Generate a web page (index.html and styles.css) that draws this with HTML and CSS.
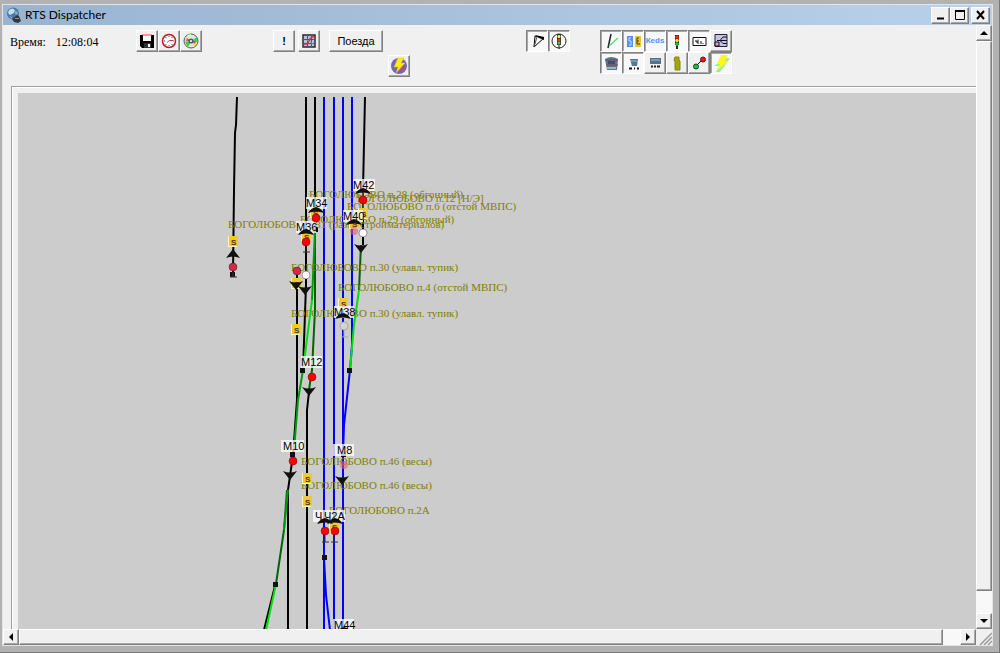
FILE: index.html
```html
<!DOCTYPE html>
<html lang="ru">
<head>
<meta charset="utf-8">
<title>RTS Dispatcher</title>
<link rel="stylesheet" href="styles.css">
</head>
<body>
<div class="window">
  <header class="titlebar">
    <svg class="app-icon" width="16" height="16" viewBox="0 0 16 16" aria-hidden="true">
      <circle cx="7" cy="6.500" r="6" fill="#4b78a8"/>
      <path d="M3 3q3-3 6 0l-1 3-4 2-2-2z" fill="#c4dcec"/>
      <path d="M9 4l3 1-1 3-2-1zM3 9l3 1v2z" fill="#88aacb"/>
      <path d="M6 12l5-4 2 1 2 5-3 2-4-1z" fill="#34383e"/>
      <path d="M9 11h4v1H9z" fill="#8c949c"/>
    </svg>
    <h1 class="title">RTS Dispatcher</h1>
    <div class="window-buttons">
      <button class="btn caption" aria-label="Свернуть"><svg width="14" height="12"><path d="M3 9.500h7" stroke="#000" stroke-width="2"/></svg></button>
      <button class="btn caption" aria-label="Развернуть"><svg width="14" height="12"><path d="M2.500 2v8.500h9V2" fill="none" stroke="#000"/><path d="M2 2h10" stroke="#000" stroke-width="2"/></svg></button>
      <button class="btn caption close" aria-label="Закрыть"><svg width="14" height="12"><path d="M3 2l7 8M10 2l-7 8" stroke="#000" stroke-width="2"/></svg></button>
    </div>
  </header>

  <main class="client">
    <div class="toolbar">
      <p class="clock"><span>Время:</span><time>12:08:04</time></p>

      <div class="group files">
        <button class="btn" aria-label="Сохранить"><svg width="16" height="16"><path d="M1 2h14v13H3l-2-2z" fill="#000"/><path d="M4 1.500h8V8H4z" fill="#fff"/><path d="M3 2h10" stroke="#f33"/><path d="M5 10h7v5H5z" fill="#333"/><path d="M9 11h2v3H9z" fill="#fff"/></svg></button>
        <button class="btn" aria-label="Время"><svg width="16" height="16"><circle cx="8" cy="8" r="6.500" fill="#fff" stroke="#c01820" stroke-width="1.500"/><path d="M8 3v1M8 12v1M3 8h1M12 8h1M5 4v1M11 4v1M5 11v1M11 11v1" stroke="#557"/><path d="M12 7.500H8.500L6 9.500" fill="none" stroke="#c33"/></svg></button>
        <button class="btn" aria-label="Диск"><svg width="16" height="16"><circle cx="8" cy="8" r="7" fill="#e4e4e4" stroke="#555"/><path d="M8 8L2 4v5z" fill="#f0ea20"/><path d="M8 8L2 9l3 5z" fill="#2bd436"/><path d="M8 8l6-4v5z" fill="#35d447"/><path d="M8 8l6 1-3 5z" fill="#f0ea20"/><path d="M8 8L4 2l4-1z" fill="#cfc"/><path d="M8 8h5l-1 3zM8 8H3l1-3z" fill="#d044c4"/><circle cx="8" cy="8" r="2.500" fill="#556"/><circle cx="8" cy="8" r="1" fill="#fff"/></svg></button>
      </div>

      <div class="group tools">
        <div class="row">
          <button class="btn alert" aria-label="Внимание">!</button>
          <button class="btn" aria-label="График"><svg width="16" height="16"><path d="M2 2h12v12H2z" fill="#b4c0e8" stroke="#2c2a28" stroke-width="1.500"/><path d="M6.500 2v12M10.500 2v12M2 6.500h12M2 10.500h12" stroke="#556"/><path d="M3 11h3l3-5 4-3" fill="none" stroke="#e22535" stroke-width="1.500"/><path d="M6 7l6 4" stroke="#6ab09b"/></svg></button>
          <button class="btn trains">Поезда</button>
        </div>
        <button class="btn power" aria-label="Энергия"><svg width="18" height="18"><circle cx="9" cy="9" r="8" fill="#7068c0"/><path d="M3 5l5 9 4 1-6-9zM12 6l4 4-4 4z" fill="#b84878"/><path d="M8 1h6l-3 5h4L6 16l2-6H4z" fill="#ffee10" stroke="#e0b820" stroke-width=".5"/></svg></button>
      </div>

      <div class="group toggles">
        <button class="btn" aria-pressed="true" aria-label="Стрелки"><svg width="18" height="18"><path d="M7 4l9 2-10 9z" fill="none" stroke="#000"/><path d="M7 3l9 2v3L11 6z" fill="#000"/><path d="M9 5l-3 10" stroke="#555"/></svg></button>
        <button class="btn" aria-pressed="true" aria-label="Светофоры"><svg width="18" height="18"><circle cx="9" cy="9" r="7" fill="none" stroke="#222"/><path d="M7 2h4v11H7z" fill="#332"/><path d="M9 12v5" stroke="#222"/><circle cx="9" cy="4.500" r="1.500" fill="#ff3"/><circle cx="9" cy="8" r="1.500" fill="#f33"/><circle cx="9" cy="11" r="1.500" fill="#2d4"/></svg></button>
      </div>

      <div class="group layers">
        <button class="btn" aria-pressed="true" aria-label="Пути"><svg width="18" height="18"><path d="M9 2L6 16" fill="none" stroke="#222" stroke-width="1.500"/><path d="M7 14l9-8" stroke="#4fe080" stroke-width="1.500"/></svg></button>
        <button class="btn" aria-pressed="true" aria-label="Секции"><svg width="18" height="18"><path d="M3 4h6v11H3z" fill="#4d94f8"/><path d="M11 4h6v11h-6z" fill="#ecc431"/><path d="M7 6H5v3h2v4H5" fill="none" stroke="#cde"/><path d="M15 6h-2v6h3M13 9h2" fill="none" stroke="#453810"/></svg></button>
        <button class="btn km" aria-pressed="true" aria-label="Км">Кеds</button>
        <button class="btn" aria-pressed="true" aria-label="Сигналы"><svg width="18" height="18"><path d="M7 3h4v10H7zM8 13h2v4H8z" fill="#222"/><circle cx="9" cy="5" r="1.800" fill="#f23"/><circle cx="9" cy="8.500" r="1.800" fill="#ed2"/><circle cx="9" cy="12" r="1.800" fill="#1c4"/></svg></button>
        <button class="btn" aria-pressed="true" aria-label="Названия"><svg width="18" height="18"><path d="M3 5.500h13v8H3z" fill="#fff" stroke="#111"/><path d="M6 8v2h2M8 7.500V12M11 9v3M13 11v1" fill="none" stroke="#111"/></svg></button>
        <button class="btn" aria-label="Схема"><svg width="18" height="18"><path d="M3 2.500h12v12H3z" fill="#c5c2e8" stroke="#223"/><path d="M15 5h-4L8 8.500l3 3h4M5 8.500h10" fill="none" stroke="#112"/><path d="M3 10h4v4H3z" fill="#e9b" stroke="#112"/></svg></button>
        <button class="btn" aria-pressed="true" aria-label="Поезд"><svg width="18" height="18"><path d="M3 5q6-4 13 0l-1 11H5z" fill="#587796"/><path d="M3 6h13M4 11h12" stroke="#8d4141"/><path d="M6 7h7v3H6z" fill="#3a526b"/><path d="M5 14h9" stroke="#9bb" stroke-width="2"/></svg></button>
        <button class="btn" aria-pressed="true" aria-label="Номера"><svg width="18" height="18"><path d="M6 5h8l-1 7H8z" fill="#557698"/><path d="M7 7h6" stroke="#9bc"/><path d="M5 14.500h3M10 14.500h1M13 14.500h2" stroke="#111" stroke-width="2"/></svg></button>
        <button class="btn" aria-label="Вагоны"><svg width="18" height="18"><path d="M4 4h11v6H4z" fill="#53718d"/><path d="M5 6h9" stroke="#a4c3dc"/><path d="M5 12.500h2M8 12.500h2M11 12.500h3" stroke="#222" stroke-width="2"/></svg></button>
        <button class="btn" aria-label="Дежурный"><svg width="18" height="18"><path d="M7 3h4v3l1 1v9H7V8L6 6z" fill="#a0a512" stroke="#848a10"/></svg></button>
        <button class="btn" aria-label="Маршрут"><svg width="18" height="18"><path d="M5 13l7-7" stroke="#111"/><circle cx="13" cy="5.500" r="2.500" fill="#e02020" stroke="#611"/><circle cx="6" cy="12.500" r="2.500" fill="#21c43a" stroke="#042"/></svg></button>
        <button class="btn" aria-pressed="true" aria-label="Питание"><svg width="18" height="18"><path d="M13 4h5l-4 6-6 8H4l3-6H2z" fill="#98eda5"/><path d="M9 1h7l-3 6h4L4 17l4-7H5z" fill="#fff61a"/></svg></button>
      </div>
    </div>

    <section class="frame">
      <svg class="canvas" role="img" aria-label="Схема станции Боголюбово">
        <defs>
          <g id="up"><path d="M-7 4L0-5L7 4Q0 1-7 4z" fill="#111"/></g>
          <g id="down"><path d="M-7-4Q0-1 7-4L0 5z" fill="#111"/></g>
          <g id="cap"><path d="M-8 4Q-5-1 0-2Q5-1 8 4Q0 1-8 4z" fill="#111"/></g>
          <g id="dot"><circle r="4" stroke="#400" stroke-opacity=".4"/></g>
          <g id="mast"><path d="M0 4v7M-3 11h7" stroke="#333"/></g>
          <g id="node"><path d="M-2-2h5v5h-5z" fill="#111"/></g>
          <g id="tag"><path d="M-5-5H4V6h-9z" fill="#fff6c0"/><path d="M-4-5h9V5h-9z" fill="#f0c832"/><text class="tag-text" x="-2" y="4">S</text></g>
        </defs>
        <g transform="translate(-18 -93)">
          <g class="track black">
            <path d="M237 97L236 125 235 133 234 190 233 275"/>
            <path d="M306 97V285L303 370"/>
            <path d="M315 97V230"/>
            <path d="M365 97L363 190V245"/>
            <path d="M297 271V400L293 455 288 490V630"/>
            <path d="M309 392L307 410V630"/>
            <path d="M275 586L264 630"/>
          </g>
          <g class="track blue">
            <path d="M324 97V630M334 97V630M343 97V630M352 97V345L350 370 344 425 343 455"/>
            <path d="M324 558L326 595 330 630"/>
          </g>
          <g class="track dark-green">
            <path d="M315 230V310L312 370 309 390"/>
            <path d="M361 245L359 290"/>
            <path d="M276 584L284 530 287 490"/>
          </g>
          <g class="track green">
            <path d="M315 230L312 300M303 370L298 400 294 450M288 490L284 530"/>
          </g>
          <g class="track lime">
            <path d="M312 300L303 370M359 290L354 325 350 370M276 584L266 630"/>
          </g>

          <g fill="#111">
            <use href="#node" x="315" y="229"/><use href="#node" x="232" y="274"/>
            <use href="#node" x="302" y="370"/><use href="#node" x="349" y="370"/>
            <use href="#node" x="292" y="454"/><use href="#node" x="343" y="454"/>
            <use href="#node" x="324" y="557"/><use href="#node" x="275" y="584"/>
          </g>

          <g class="place">
            <text x="309" y="198">БОГОЛЮБОВО п.28 (обгонный)</text>
            <text x="357" y="202">БОГОЛЮБОВО п.12 [Н/Э]</text>
            <text x="347" y="210">БОГОЛЮБОВО п.6 (отстой МВПС)</text>
            <text x="300" y="223">БОГОЛЮБОВО п.29 (обгонный)</text>
            <text x="228" y="228">БОГОЛЮБОВО п.31 (разгр стройматериалов)</text>
            <text x="291" y="271">БОГОЛЮБОВО п.30 (улавл. тупик)</text>
            <text x="338" y="291">БОГОЛЮБОВО п.4 (отстой МВПС)</text>
            <text x="291" y="317">БОГОЛЮБОВО п.30 (улавл. тупик)</text>
            <text x="301" y="465">БОГОЛЮБОВО п.46 (весы)</text>
            <text x="301" y="489">БОГОЛЮБОВО п.46 (весы)</text>
            <text x="329" y="514">БОГОЛЮБОВО п.2А</text>
          </g>

          <use href="#tag" x="233" y="241"/><use href="#tag" x="315" y="212"/>
          <use href="#tag" x="306" y="236"/><use href="#tag" x="354" y="223"/>
          <use href="#tag" x="363" y="213"/><use href="#tag" x="296" y="283"/>
          <use href="#tag" x="343" y="303"/><use href="#tag" x="296" y="329"/>
          <use href="#tag" x="307" y="478"/><use href="#tag" x="307" y="501"/>
          <use href="#tag" x="334" y="526"/>

          <g class="plate">
            <path d="M353 179h22v12h-22zM306 197h21v12h-21zM343 210h20v12h-20zM296 221h20v12h-20zM334 306h20v12h-20zM301 356h21v12h-21zM281 440h23v12h-23zM333 444h21v12h-21zM313 510h32v12h-32zM333 619h21v12h-21z"/>
          </g>

          <use href="#up" x="233" y="254"/>
          <use href="#cap" x="363" y="190"/><use href="#cap" x="316" y="209"/>
          <use href="#cap" x="354" y="221"/><use href="#cap" x="306" y="231"/>
          <use href="#cap" x="343" y="315"/><use href="#cap" x="325" y="520"/>
          <use href="#cap" x="335" y="520"/><use href="#cap" x="344" y="629"/>
          <use href="#down" x="361" y="248"/><use href="#down" x="296" y="285"/>
          <use href="#down" x="305" y="290"/><use href="#down" x="309" y="391"/>
          <use href="#down" x="290" y="475"/><use href="#down" x="342" y="480"/>

          <g class="signal-name">
            <text x="353" y="189">М42</text><text x="306" y="207">М34</text>
            <text x="343" y="220">М40</text><text x="296" y="231">М36</text>
            <text x="334" y="316">М38</text><text x="301" y="366">М12</text>
            <text x="283" y="450">М10</text><text x="337" y="454">М8</text>
            <text x="315" y="520">Ч</text><text x="324" y="520">Ч2А</text>
            <text x="334" y="629">М44</text>
          </g>

          <use href="#mast" x="325" y="531"/><use href="#mast" x="334" y="531"/>
          <use href="#mast" x="306" y="241"/><use href="#mast" x="233" y="266"/>
          <g fill="#ff0000">
            <use href="#dot" x="363" y="200"/><use href="#dot" x="316" y="218"/>
            <use href="#dot" x="306" y="242"/><use href="#dot" x="312" y="377"/>
            <use href="#dot" x="293" y="461"/><use href="#dot" x="325" y="531"/>
            <use href="#dot" x="335" y="531"/>
          </g>
          <g fill="#c83048"><use href="#dot" x="233" y="267"/><use href="#dot" x="297" y="271"/></g>
          <g fill="#ffffff"><use href="#dot" x="363" y="233"/><use href="#dot" x="306" y="275"/></g>
          <g class="dimmed"><circle cx="354" cy="231" r="4"/><circle cx="344" cy="465" r="4"/></g>
          <g class="unlit"><circle cx="344" cy="326" r="4"/><path d="M344 330v7M341 337h7"/></g>
        </g>
      </svg>
    </section>
  </main>

  <div class="scroll vertical">
    <button class="btn arrow" aria-label="Вверх"><svg width="8" height="5"><path d="M4 0l4 4H0z"/></svg></button>
    <div class="thumb"></div><div class="rest"></div>
    <button class="btn arrow" aria-label="Вниз"><svg width="8" height="5"><path d="M0 0h8L4 4z"/></svg></button>
  </div>
  <div class="scroll horizontal">
    <button class="btn arrow" aria-label="Влево"><svg width="5" height="8"><path d="M0 4l4-4v8z"/></svg></button>
    <div class="thumb"></div><div class="rest"></div>
    <button class="btn arrow" aria-label="Вправо"><svg width="5" height="8"><path d="M0 0l4 4-4 4z"/></svg></button>
  </div>
  <svg class="grip" width="16" height="16" aria-hidden="true"><path d="M4 16L16 4M8 16l8-8M12 16l4-4" stroke="#999" stroke-width="1.500"/></svg>
</div>
</body>
</html>
```
FILE: styles.css
```css
* { box-sizing: border-box; }

body {
  margin: 0;
  height: 100vh;
  padding: 4px 6px 6px 2px;
  background: #b2b2b2;
  border-right: 1px solid #777;
  border-bottom: 1px solid #777;
  font-family: "Liberation Sans", Arial, sans-serif;
  color: #000;
}

.window {
  height: 100%;
  display: grid;
  grid-template-columns: minmax(0, 1fr) 16px;
  grid-template-rows: 20px minmax(0, 1fr) 16px;
  background: #f0f0f0;
  border: 1px solid #e4e4e4;
}

.titlebar {
  grid-column: 1 / -1;
  display: flex;
  align-items: center;
  gap: 3px;
  padding: 0 2px 0 3px;
  background: linear-gradient(90deg, #99b4d1, #b9d1ea);
}
.title {
  margin: 0;
  flex: 1;
  font: 400 12px/16px Lato, sans-serif;
}
.window-buttons { display: flex; }

.btn {
  width: 22px;
  height: 22px;
  padding: 0;
  display: flex;
  align-items: center;
  justify-content: center;
  background: #f0f0f0;
  border: 1px solid;
  border-color: #fff #808080 #808080 #fff;
  box-shadow: inset -1px -1px #a8a8a8;
  color: #000;
  font: 11px/14px "Liberation Sans", Arial, sans-serif;
}
.btn[aria-pressed="true"] {
  background: #f8f8f8;
  border-color: #808080 #fff #fff #808080;
  box-shadow: inset 1px 1px #a8a8a8;
}
.caption { width: 19px; height: 17px; }
.close { margin-left: 2px; }

.client {
  min-width: 0;
  display: flex;
  flex-direction: column;
}

.toolbar {
  height: 61px;
  flex: none;
  display: flex;
  padding: 5px 0 0 7px;
}
.clock {
  margin: 4px 0 0;
  width: 126px;
  display: flex;
  gap: 10px;
  font: 12px/16px "Liberation Serif", serif;
}
.group { display: flex; }
.files { width: 137px; align-items: flex-start; }
.tools {
  width: 137px;
  flex-direction: column;
  gap: 3px;
}
.row { display: flex; gap: 3px; }
.alert { font-weight: 700; }
.trains { width: 54px; margin-left: 6px; }
.power { align-self: flex-end; }
.toggles { margin-left: 116px; align-items: flex-start; }
.layers {
  margin-left: 30px;
  display: grid;
  grid-template-columns: repeat(6, 22px);
  align-content: start;
}
.km { color: #4c94f0; font-size: 8px; font-weight: 700; }

.frame {
  flex: 1;
  min-height: 0;
  margin-left: 8px;
  padding: 6px 0 0 6px;
  border-top: 1px solid #a0a0a0;
  border-left: 1px solid #a0a0a0;
  box-shadow: inset 1px 1px #fff;
}
.canvas {
  display: block;
  width: 100%;
  height: 100%;
  background: #cccccc;
}

.track { fill: none; stroke-width: 2; }
.black { stroke: #000; }
.blue { stroke: #0000ff; }
.dark-green { stroke: #006400; }
.green { stroke: #009c10; }
.lime { stroke: #00e010; }

.place { font: 11px "Liberation Serif", serif; fill: #808000; }
.signal-name { font: 11px "Liberation Sans", Arial, sans-serif; fill: #000; }
.tag-text { font: 700 8px "Liberation Sans", Arial, sans-serif; fill: #4a3a00; }
.plate { fill: #fff; fill-opacity: .75; }
.dimmed { fill: #e06070; fill-opacity: .6; }
.unlit { fill: #d4d4d4; stroke: #aaa; }

.scroll { display: flex; background: #f8f8f8; }
.vertical { flex-direction: column; }
.arrow { width: 16px; height: 16px; flex: none; }
.thumb {
  background: #f0f0f0;
  border: 1px solid;
  border-color: #fff #808080 #808080 #fff;
  box-shadow: inset -1px -1px #a8a8a8;
}
.vertical .thumb { flex: 550; }
.vertical .rest { flex: 22; }
.horizontal .thumb { flex: 925; }
.horizontal .rest { flex: 17; }
```
